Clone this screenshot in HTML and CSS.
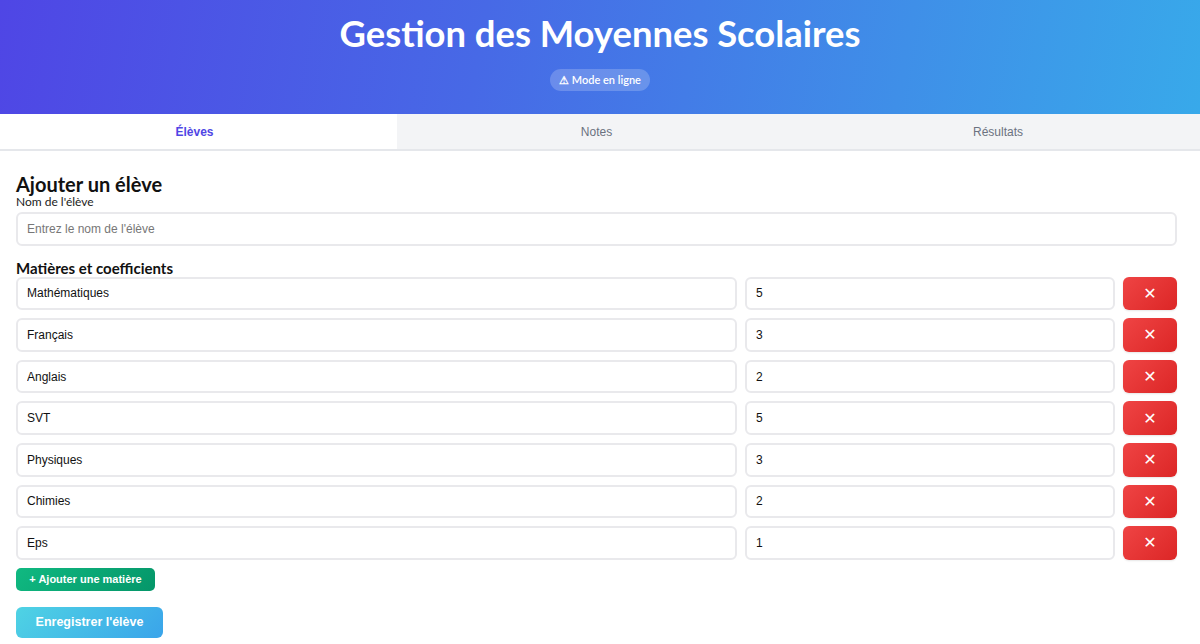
FILE: index.html
```html
<!DOCTYPE html>
<html lang="fr">
<head>
<meta charset="utf-8">
<title>Gestion des Moyennes Scolaires</title>
<link rel="stylesheet" href="styles.css">
</head>
<body>
<header class="hero">
  <h1 class="hero-title">Gestion des Moyennes Scolaires</h1>
  <span class="badge">⚠ Mode en ligne</span>
</header>
<nav class="tabs">
  <div class="tab active">Élèves</div>
  <div class="tab">Notes</div>
  <div class="tab">Résultats</div>
</nav>
<main class="content">
  <h2 class="section-title">Ajouter un élève</h2>
  <label class="label">Nom de l'élève</label>
  <input class="field" type="text" placeholder="Entrez le nom de l'élève">
  <h3 class="sub-title">Matières et coefficients</h3>
  <div class="subjects">
    <div class="subject-row"><input class="field" value="Mathématiques"><input class="field" value="5"><button class="del">✕</button></div>
    <div class="subject-row"><input class="field" value="Français"><input class="field" value="3"><button class="del">✕</button></div>
    <div class="subject-row"><input class="field" value="Anglais"><input class="field" value="2"><button class="del">✕</button></div>
    <div class="subject-row"><input class="field" value="SVT"><input class="field" value="5"><button class="del">✕</button></div>
    <div class="subject-row"><input class="field" value="Physiques"><input class="field" value="3"><button class="del">✕</button></div>
    <div class="subject-row"><input class="field" value="Chimies"><input class="field" value="2"><button class="del">✕</button></div>
    <div class="subject-row"><input class="field" value="Eps"><input class="field" value="1"><button class="del">✕</button></div>
  </div>
  <button class="add-btn">+ Ajouter une matière</button>
  <button class="save-btn">Enregistrer l'élève</button>
</main>
</body>
</html>
```

FILE: styles.css
```css
* { box-sizing: border-box; }
html, body { margin: 0; padding: 0; background: #ffffff; }
body { font-family: "Lato", "Liberation Sans", sans-serif; color: #111; }

.hero {
  height: 114px;
  background: linear-gradient(100deg, #4f46e5 0%, #4769e6 40%, #3f8fe8 75%, #38a9ea 100%);
  display: flex;
  flex-direction: column;
  align-items: center;
  padding-top: 11px;
}
.hero-title {
  margin: 0;
  color: #fff;
  font-family: "Lato", sans-serif;
  font-weight: 700;
  font-size: 36.4px;
  line-height: 44px;
}
.badge {
  margin-top: 14px;
  padding: 0 9px;
  height: 22px;
  line-height: 22px;
  border-radius: 11px;
  background: rgba(255,255,255,0.2);
  color: #fff;
  font-size: 11px;
  font-weight: 600;
  font-family: "Lato", sans-serif;
}

.tabs {
  display: grid;
  grid-template-columns: 397px 399px 1fr;
  height: 37px;
  border-bottom: 2px solid #e5e7eb;
  background: #f3f4f6;
}
.tab {
  display: flex;
  align-items: center;
  justify-content: center;
  font-family: "Liberation Sans", Arial, sans-serif;
  font-size: 12px;
  color: #6b7280;
}
.tab.active {
  background: #fff;
  color: #4f46e5;
  font-weight: 700;
  padding-right: 8px;
}

.content {
  padding: 22px 23px 0 16px;
  display: flex;
  flex-direction: column;
  align-items: flex-start;
}
.section-title {
  margin: 0;
  font-size: 20px;
  font-weight: 700;
  line-height: 22px;
  color: #111;
}
.label {
  font-size: 12px;
  line-height: 14px;
  color: #222;
  margin-top: 0;
  margin-bottom: 3px;
}
.field {
  width: 100%;
  height: 33.6px;
  border: 2px solid #e9e9ec;
  border-radius: 6px;
  padding: 0 9px;
  font-family: "Liberation Sans", Arial, sans-serif;
  font-size: 12px;
  color: #111;
  background: #fff;
  outline: none;
}
.field::placeholder { color: #777; }
.sub-title {
  margin: 13px 0 0 0;
  font-size: 15px;
  font-weight: 700;
  line-height: 18px;
  color: #111;
}
.subjects {
  width: 100%;
  display: flex;
  flex-direction: column;
  gap: 8px;
}
.subject-row {
  display: grid;
  grid-template-columns: 721fr 370fr 54px;
  gap: 8px;
}
.del {
  height: 33.6px;
  border: none;
  border-radius: 6px;
  background: linear-gradient(135deg, #ef4444, #dc2626);
  color: #fff;
  font-family: "DejaVu Sans", sans-serif;
  font-size: 16px;
  padding: 0;
  box-shadow: 0 1px 2px rgba(0,0,0,0.1);
}
.add-btn {
  margin-top: 8px;
  height: 23px;
  width: 139px;
  border: none;
  border-radius: 5px;
  background: linear-gradient(135deg, #10b981, #059669);
  color: #fff;
  font-family: "Liberation Sans", Arial, sans-serif;
  font-weight: 700;
  font-size: 11px;
}
.save-btn {
  margin-top: 16px;
  height: 31px;
  width: 147px;
  border: none;
  border-radius: 6px;
  background: linear-gradient(135deg, #4fd3e4, #3aa4ea);
  color: #fff;
  font-family: "Liberation Sans", Arial, sans-serif;
  font-weight: 700;
  font-size: 12.5px;
}
```
